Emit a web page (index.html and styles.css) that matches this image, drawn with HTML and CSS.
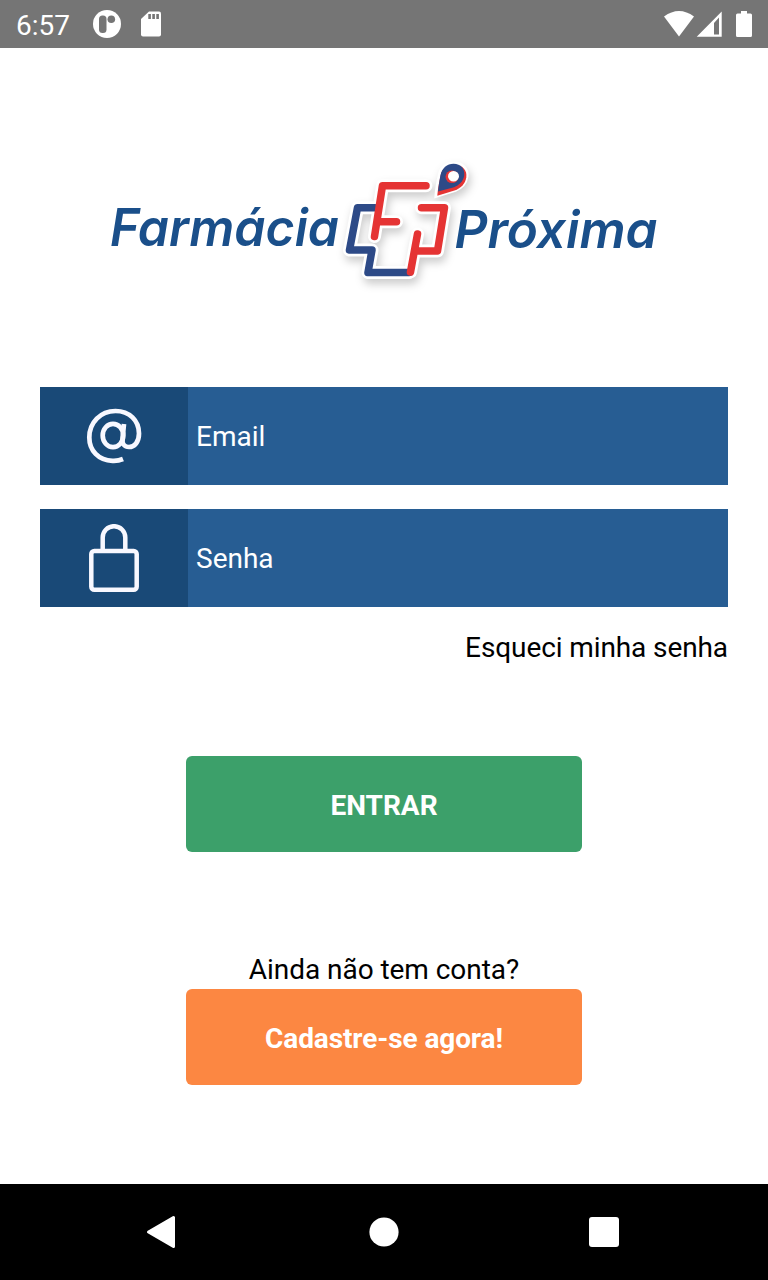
FILE: index.html
```html
<!DOCTYPE html>
<html lang="pt-BR">
<head>
    <meta charset="UTF-8">
    <meta name="viewport" content="width=device-width, initial-scale=1.0">
    <title>Farmácia Próxima</title>
    <link rel="stylesheet" href="styles.css">
</head>
<body>
    <div class="status-bar">
        <span class="clock">6:57</span>
        <svg class="status-app" width="28" height="28" viewBox="0 0 28 28">
            <circle cx="14" cy="14" r="14" fill="#fff"/>
            <rect x="6" y="5.5" width="7.5" height="17.5" rx="3.5" fill="#757575"/>
            <circle cx="18.3" cy="9.3" r="3.8" fill="#757575"/>
        </svg>
        <svg class="status-card" width="20" height="26" viewBox="0 0 20 26">
            <path d="M8 .5h10a2 2 0 0 1 2 2v21a2 2 0 0 1-2 2H2a2 2 0 0 1-2-2V8z" fill="#fff"/>
            <path d="M7.3 3h2.6v5H7.3zM11.3 3h2.6v5h-2.6zM15.3 3h2.6v5h-2.6z" fill="#757575"/>
        </svg>
        <svg class="status-right" width="90" height="28" viewBox="0 0 90 28">
            <path d="M1 6.5Q16-4.500 31 6.500L16 26.500z" fill="#fff"/>
            <path d="M58.700 1.500v25.200H33.700zM56 7.500L51 13V24.500h5z" fill="#fff" fill-rule="evenodd"/>
            <path d="M78 1h6v2.500H87.500a1.500 1.500 0 0 1 1.500 1.500v20.500a1.500 1.500 0 0 1-1.500 1.500H74.500a1.500 1.500 0 0 1-1.500-1.500V5A1.500 1.500 0 0 1 74.500 3.500h3.500z" fill="#fff"/>
        </svg>
    </div>

    <main class="login">
        <svg class="logo" width="568" height="150" viewBox="100 150 568 150">
            <defs>
                <g id="cross" fill="none" stroke-linecap="round" stroke-linejoin="round">
                    <path class="blue" d="M375 207.700H357.500L349.500 250H372L368 272.500H409"/>
                    <path class="red" d="M426 185.700H382.500L374.500 236.500M379 221.700H396.500"/>
                    <path class="red" d="M421.500 207.700H444.500L437.500 251H419M417.500 234L410.500 272"/>
                </g>
                <path id="pin" d="M437 195C437.500 189 438.500 183 440.500 174C442 168 447 164 454 164C462 164 467 169.500 466 176.500C465 183 461 187 455 189.500Z"/>
            </defs>
            <g class="logo-outline">
                <use href="#cross"/>
                <use href="#pin"/>
            </g>
            <use href="#cross" class="logo-cross"/>
            <use href="#pin" x="0.300" y="0.800" fill="#e53434"/>
            <path d="M438 191.500C438.500 187 439.300 181 440.500 175C442 168 447 163.700 453.500 163.700C461 163.700 465 169 464.200 175.500C463.200 181.500 459.500 185 454 187.200Z" fill="#2d4a87"/>
            <ellipse cx="452" cy="176.800" rx="6.500" ry="6.300" fill="#e53434"/>
            <ellipse cx="453.500" cy="176.200" rx="5.500" ry="5.300" fill="#fff"/>
            <text class="logo-text" x="110" y="246" textLength="229" lengthAdjust="spacingAndGlyphs">Farmácia</text>
            <text class="logo-text" x="454.500" y="248" textLength="203" lengthAdjust="spacingAndGlyphs">Próxima</text>
        </svg>

        <div class="field">
            <div class="field-icon">
                <svg width="56" height="56" viewBox="0 0 56 56" fill="none" stroke="#f8f8ff" stroke-width="4.700">
                    <path d="M37 51C33.500 52.500 30 53 26.500 52.800C12.500 52.500 3.300 42.500 3.300 29.500C3.300 14.500 14.500 3 29.500 3C43.500 3 53 12.500 53 25.500C53 34 48.500 39 43 39C38.500 39 36 36 36.500 31L38 16"/>
                    <ellipse cx="27" cy="27.500" rx="10.300" ry="11.600"/>
                </svg>
            </div>
            <div class="field-input">Email</div>
        </div>

        <div class="field">
            <div class="field-icon">
                <svg width="50" height="68" viewBox="0 0 50 68" fill="none" stroke="#f8f8ff" stroke-width="4.500">
                    <rect x="2.300" y="27" width="45.400" height="38.700" rx="3"/>
                    <path d="M13.700 27V13.500a11.300 11.300 0 0 1 22.600 0V27"/>
                </svg>
            </div>
            <div class="field-input">Senha</div>
        </div>

        <a class="forgot">Esqueci minha senha</a>

        <button class="btn btn-enter">ENTRAR</button>

        <p class="no-account">Ainda não tem conta?</p>
        <button class="btn btn-register">Cadastre-se agora!</button>
    </main>

    <div class="nav-bar">
        <svg width="30" height="34" viewBox="0 0 30 34">
            <path d="M2.500 17L27.500 2.500V31.500z" fill="#fff" stroke="#fff" stroke-width="3" stroke-linejoin="round"/>
        </svg>
        <svg width="32" height="30" viewBox="0 0 32 30">
            <circle cx="17" cy="15" r="14.600" fill="#fff"/>
        </svg>
        <svg width="30" height="30" viewBox="0 0 30 30">
            <rect width="30" height="30" rx="3" fill="#fff"/>
        </svg>
    </div>
</body>
</html>
```

FILE: styles.css
```css
* {
    box-sizing: border-box;
}

body {
    font-family: Roboto, sans-serif;
    font-size: 28px;
    line-height: 34px;
    margin: 0;
    height: 1280px;
    display: flex;
    flex-direction: column;
    background: #fff;
    color: #000;
}

.status-bar {
    height: 48px;
    padding: 0 15px 0 16px;
    display: flex;
    align-items: center;
    background: #757575;
    color: #fff;
}

.clock {
    width: 77px;
    padding-top: 3px;
}

.status-card {
    margin-left: 20px;
}

.status-right {
    margin-left: auto;
}

.login {
    flex: 1;
    padding: 102px 40px 0;
    display: flex;
    flex-direction: column;
    align-items: center;
}

.logo {
    margin-bottom: 87px;
}

.logo-text {
    font-family: Inter, sans-serif;
    font-size: 52px;
    font-weight: 600;
    font-style: italic;
    font-feature-settings: "cv11";
    fill: #1a4f8a;
}

.blue {
    stroke: #2d4a87;
}

.red {
    stroke: #e53434;
}

.logo-cross {
    stroke-width: 7.5px;
}

.logo-outline {
    stroke-width: 13px;
    fill: #fff;
    filter: brightness(0) invert(1) drop-shadow(2px 5px 4px rgba(0, 0, 0, 0.2));
}

.logo-outline use {
    stroke: #fff;
}

.logo-outline use + use {
    stroke-width: 5px;
}

.field {
    width: 100%;
    height: 98px;
    margin-bottom: 24px;
    display: flex;
    background: #275d93;
    color: #fff;
}

.field-icon {
    width: 148px;
    display: flex;
    align-items: center;
    justify-content: center;
    background: #194977;
}

.field-input {
    padding: 33px 8px 31px;
}

.forgot {
    align-self: flex-end;
    margin-bottom: 91px;
    letter-spacing: -0.1px;
}

.btn {
    width: 396px;
    height: 96px;
    padding: 3px 0 0;
    border: none;
    border-radius: 6px;
    color: #fff;
    font-family: inherit;
    font-size: 28px;
    font-weight: 700;
}

.btn-enter {
    background: #3ca06a;
    margin-bottom: 101px;
}

.btn-register {
    background: #fc8742;
    letter-spacing: -0.1px;
}

.no-account {
    margin: 0 0 2px;
    letter-spacing: -0.05px;
}

.nav-bar {
    height: 96px;
    padding: 0 149px 0 146px;
    display: flex;
    align-items: center;
    justify-content: space-between;
    background: #000;
}
```
